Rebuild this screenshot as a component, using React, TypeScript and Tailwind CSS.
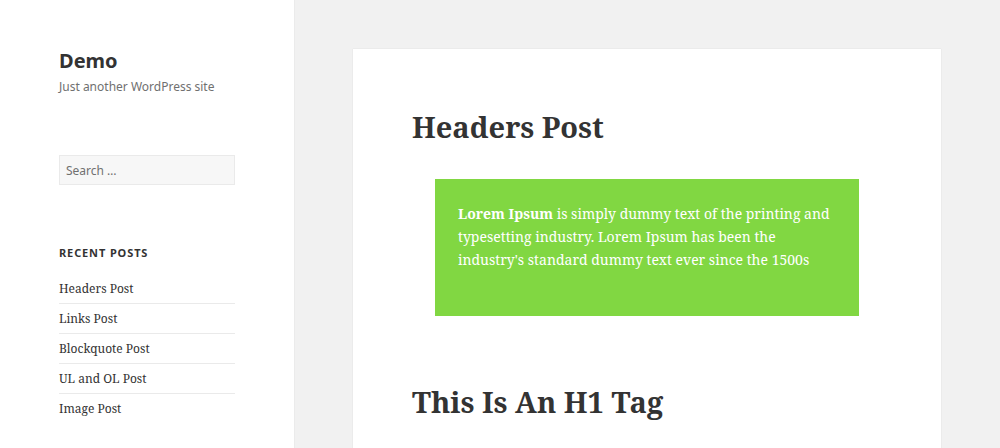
import React from "react";

const serif = "font-['Noto_Serif','DejaVu_Serif',serif]";

export default function App() {
  const posts = ["Headers Post", "Links Post", "Blockquote Post", "UL and OL Post", "Image Post"];
  return (
    <div className="flex h-[448px] w-[1000px] overflow-hidden bg-[#f1f1f1] font-['Noto_Sans',sans-serif]">
      <aside className="w-[294px] shrink-0 bg-white pl-[59px] pr-[59px] pt-[47px] shadow-[0_0_1px_rgba(0,0,0,0.15)]">
        <div className="text-[20px] font-bold leading-[28px] text-[#333]">Demo</div>
        <div className="mt-[3px] text-[12px] leading-[18px] text-[#707070]">Just another WordPress site</div>
        <div className="mt-[59px] h-[30px] w-[176px] border border-[#eaeaea] bg-[#f7f7f7] px-[6px] pt-[1px] text-[12px] leading-[28px] text-[#707070]">
          Search …
        </div>
        <div className="mt-[60px] text-[11px] font-bold uppercase leading-[16px] tracking-[0.08em] text-[#333]">Recent Posts</div>
        <ul className={`mt-[13px] w-[176px] ${serif}`}>
          {posts.map((p, i) => (
            <li
              key={p}
              className={`${i < posts.length - 1 ? "border-b border-[#eaeaea]" : ""} pb-[5px] pt-[5px] text-[12px] leading-[19px] text-[#333]`}
            >
              {p}
            </li>
          ))}
        </ul>
      </aside>
      <main className="flex-1 pl-[59px] pt-[49px]">
        <article className={`w-[588px] bg-white px-[59px] pt-[58px] shadow-[0_0_1px_rgba(0,0,0,0.15)] ${serif} h-[420px]`}>
          <h1 className="text-[29px] font-bold leading-[40px] text-[#333]">Headers Post</h1>
          <div className="mx-[23px] mt-[32px] h-[137px] bg-[#81d742] px-[23px] pt-[23px] text-[14px] leading-[23px] text-white">
            <strong>Lorem Ipsum</strong> is simply dummy text of the printing and typesetting industry. Lorem Ipsum has been the industry's standard dummy text ever since the 1500s
          </div>
          <h2 className="mt-[66px] text-[29px] font-bold leading-[40px] text-[#333]">This Is An H1 Tag</h2>
        </article>
      </main>
    </div>
  );
}
